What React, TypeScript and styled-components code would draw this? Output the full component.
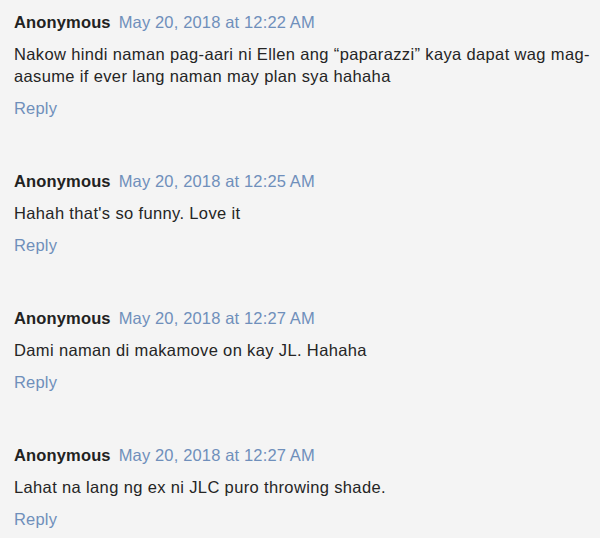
import styled, { createGlobalStyle } from 'styled-components'

const GlobalStyle = createGlobalStyle`
  html, body {
    margin: 0;
    padding: 0;
    background: #f4f4f4;
  }
  body {
    font-family: "Liberation Sans", Arial, sans-serif;
  }
`

const Page = styled.div`
  width: 600px;
  height: 538px;
  overflow: hidden;
  background: #f4f4f4;
  padding: 11px 8px 0 14px;
  box-sizing: border-box;
`

const CommentBlock = styled.div`
  margin-bottom: 51px;
`

const Header = styled.div`
  display: flex;
  align-items: baseline;
  gap: 8px;
  font-size: 16.5px;
  line-height: 22px;
  letter-spacing: 0.15px;
`

const Author = styled.span`
  font-weight: bold;
  color: #222222;
`

const Timestamp = styled.span`
  color: #6f8fbb;
`

const Body = styled.p`
  margin: 10px 0 0;
  font-size: 16.5px;
  line-height: 22px;
  letter-spacing: 0.36px;
  color: #252525;
`

const ReplyLink = styled.div`
  margin-top: 10px;
  font-size: 16.5px;
  line-height: 22px;
  letter-spacing: 0.2px;
  color: #6f8fbb;
`

const comments = [
  {
    time: 'May 20, 2018 at 12:22 AM',
    text: 'Nakow hindi naman pag-aari ni Ellen ang “paparazzi” kaya dapat wag mag-aasume if ever lang naman may plan sya hahaha'
  },
  { time: 'May 20, 2018 at 12:25 AM', text: "Hahah that's so funny. Love it" },
  { time: 'May 20, 2018 at 12:27 AM', text: 'Dami naman di makamove on kay JL. Hahaha' },
  { time: 'May 20, 2018 at 12:27 AM', text: 'Lahat na lang ng ex ni JLC puro throwing shade.' }
]

export default function App() {
  return (
    <Page>
      <GlobalStyle />
      {comments.map((c, idx) => (
        <CommentBlock key={idx}>
          <Header>
            <Author>Anonymous</Author>
            <Timestamp>{c.time}</Timestamp>
          </Header>
          <Body>{c.text}</Body>
          <ReplyLink>Reply</ReplyLink>
        </CommentBlock>
      ))}
    </Page>
  )
}
